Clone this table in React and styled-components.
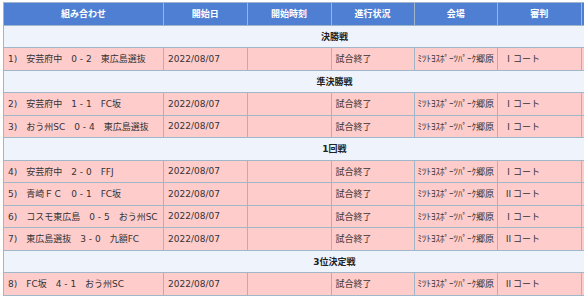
import React from 'react';
import styled, { createGlobalStyle } from 'styled-components';

const GlobalStyle = createGlobalStyle`
  html, body {
    margin: 0;
    padding: 0;
    background: #ffffff;
    overflow: hidden;
  }
  body {
    font-family: "DejaVu Sans", "Noto Sans CJK JP", sans-serif;
  }
`;

const Page = styled.div`
  padding: 2px 0 0 3px;
  width: 700px;
`;

const Table = styled.table`
  border-collapse: collapse;
  width: 662px;
  table-layout: fixed;
  font-size: 9px;
  color: #333333;
`;

const HeadCell = styled.th`
  background: #4f7fd3;
  color: #ffffff;
  font-weight: bold;
  height: 21.5px;
  padding: 0;
  border: 1px solid #9fb7c9;
  text-align: center;
  line-height: 14px;
`;

const SectionCell = styled.td`
  background: #eef3fc;
  font-weight: bold;
  text-align: center;
  height: 21.5px;
  padding: 0;
  border: 1px solid #9fb7c9;
  color: #222222;
`;

const Cell = styled.td`
  background: #ffcccc;
  height: 21.5px;
  padding: 0 0 0 ${p => p.$pad || 4}px;
  border: 1px solid #9fb7c9;
  white-space: pre;
  overflow: hidden;
  font-family: ${p => p.$cjk ? '"Noto Sans CJK JP", sans-serif' : 'inherit'};
`;

const columns = [
  { label: '組み合わせ', width: 160 },
  { label: '開始日', width: 83.5 },
  { label: '開始時刻', width: 84 },
  { label: '進行状況', width: 83 },
  { label: '会場', width: 83.5 },
  { label: '審判', width: 83.5 },
  { label: '備考', width: 84.5 },
];

const VENUE = 'ﾐﾂﾄﾖｽﾎﾟｰﾂﾊﾟｰｸ郷原';
const GAP = '\u3000';

const sections = [
  {
    title: '決勝戦',
    games: [{ no: 1, home: '安芸府中', score: '0 - 2', away: '東広島選抜', court: 'Ⅰ' }],
  },
  {
    title: '準決勝戦',
    games: [
      { no: 2, home: '安芸府中', score: '1 - 1', away: 'FC坂', court: 'Ⅰ' },
      { no: 3, home: 'おう州SC', score: '0 - 4', away: '東広島選抜', court: 'Ⅰ' },
    ],
  },
  {
    title: '1回戦',
    games: [
      { no: 4, home: '安芸府中', score: '2 - 0', away: 'FFJ', court: 'Ⅰ' },
      { no: 5, home: '青崎ＦＣ', score: '0 - 1', away: 'FC坂', court: 'Ⅱ' },
      { no: 6, home: 'コスモ東広島', score: '0 - 5', away: 'おう州SC', court: 'Ⅰ' },
      { no: 7, home: '東広島選抜', score: '3 - 0', away: '九額FC', court: 'Ⅱ' },
    ],
  },
  {
    title: '3位決定戦',
    games: [{ no: 8, home: 'FC坂', score: '4 - 1', away: 'おう州SC', court: 'Ⅱ' }],
  },
];

function App() {
  return (
    <Page>
      <GlobalStyle />
      <Table>
        <colgroup>
          {columns.map(c => <col key={c.label} style={{ width: c.width }} />)}
        </colgroup>
        <thead>
          <tr>
            {columns.map(c => <HeadCell key={c.label}>{c.label}</HeadCell>)}
          </tr>
        </thead>
        <tbody>
          {sections.map(s => (
            <React.Fragment key={s.title}>
              <tr>
                <SectionCell colSpan={7}>{s.title}</SectionCell>
              </tr>
              {s.games.map(g => (
                <tr key={g.no}>
                  <Cell>{`${g.no})${GAP}${g.home}${GAP}${g.score}${GAP}${g.away}`}</Cell>
                  <Cell>2022/08/07</Cell>
                  <Cell></Cell>
                  <Cell>試合終了</Cell>
                  <Cell $cjk $pad={3}>{VENUE}</Cell>
                  <Cell $cjk $pad={6}>{g.court}コート</Cell>
                  <Cell></Cell>
                </tr>
              ))}
            </React.Fragment>
          ))}
        </tbody>
      </Table>
    </Page>
  );
}

export default App;
